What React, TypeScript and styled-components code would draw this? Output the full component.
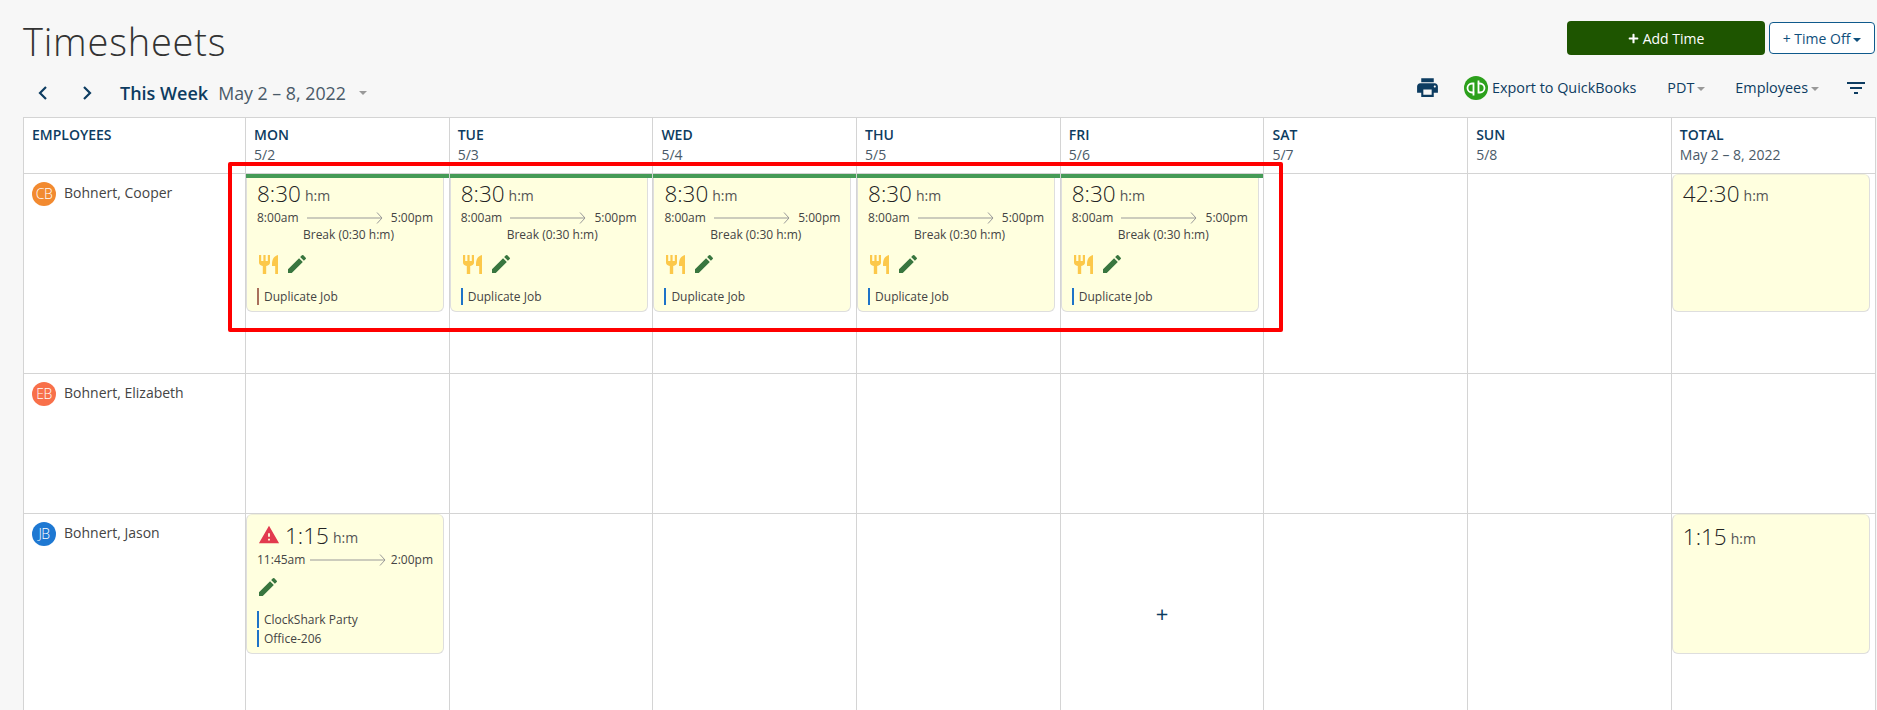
import React from 'react';
import styled, { createGlobalStyle } from 'styled-components';
import { MdEdit, MdFilterList, MdPrint, MdWarning } from 'react-icons/md';
import { FaPlus } from 'react-icons/fa';

const GlobalStyle = createGlobalStyle`
  html, body {
    margin: 0;
    height: 710px;
    overflow: hidden;
    background: #f7f7f7;
    font-family: "Open Sans", "Noto Sans", sans-serif;
    color: #333;
  }
`;

const Page = styled.div`
  position: relative;
  padding: 0 2px 0 23px;
`;

const TopBar = styled.div`
  display: flex;
  justify-content: space-between;
  height: 68px;
`;

const Title = styled.h1`
  margin: 16px 0 0;
  font-size: 38px;
  line-height: 50px;
  font-weight: 300;
  letter-spacing: 0.8px;
  color: #333;
`;

const TopButtons = styled.div`
  display: flex;
  gap: 4px;
  margin-top: 21px;
  align-items: flex-start;
`;

const AddButton = styled.button`
  display: flex;
  align-items: center;
  justify-content: center;
  gap: 4px;
  width: 198px;
  height: 34px;
  border: 0;
  border-radius: 4px;
  background: #1e5500;
  color: #fff;
  font: 500 14px "Open Sans", sans-serif;
`;

const OffButton = styled.button`
  width: 106px;
  height: 32px;
  margin-top: 1px;
  padding: 0;
  border: 1px solid #0f5a8c;
  border-radius: 4px;
  background: #fff;
  color: #0f4f7c;
  font: 400 14px "Open Sans", sans-serif;
`;

const Caret = styled.span<{ $muted?: boolean; $gap?: number }>`
  display: inline-block;
  margin-left: ${(p) => p.$gap ?? 3}px;
  vertical-align: middle;
  border-top: 4px solid ${(p) => (p.$muted ? '#999' : 'currentColor')};
  border-left: 4px solid transparent;
  border-right: 4px solid transparent;
`;

const NavBar = styled.div`
  display: flex;
  align-items: center;
  justify-content: space-between;
  height: 49px;
  color: #0d3c61;
`;

const WeekNav = styled.div`
  display: flex;
  align-items: center;
  padding-left: 15px;
`;

const Chevron = styled.svg`
  width: 10px;
  height: 14px;
  margin-right: 34px;
  fill: none;
  stroke: #0d3c61;
  stroke-width: 2.2;
`;

const ThisWeek = styled.span`
  margin-left: -6px;
  font-size: 18px;
  font-weight: 600;
`;

const WeekRange = styled.span`
  margin-left: 10px;
  font-size: 17.8px;
  color: #4a5a68;
`;

const Tools = styled.div`
  display: flex;
  align-items: center;
  margin-bottom: 10px;
  padding-right: 7px;
  font-size: 14.4px;
  font-weight: 500;
`;

const PrintIcon = styled(MdPrint)`
  font-size: 25px;
  color: #0d3c61;
  margin-right: 24px;
`;

const QbLogo = styled.svg`
  width: 24px;
  height: 24px;
  margin-right: 4px;
`;

const ToolLabel = styled.span<{ $gap: number }>`
  margin-right: ${(p) => p.$gap}px;
  white-space: nowrap;
`;

const FilterIcon = styled(MdFilterList)`
  font-size: 24px;
  color: #0d3c61;
`;

const Sheet = styled.div`
  display: grid;
  grid-template-columns: 222px repeat(8, 203.7px);
  width: 1853px;
  margin-right: -1px;
  background: #fff;
  border-top: 1px solid #d4d4d4;
  border-left: 1px solid #d4d4d4;
  box-sizing: border-box;
`;

const HeadCell = styled.div`
  height: 56px;
  padding: 7px 8px 0;
  box-sizing: border-box;
  border-right: 1px solid #d4d4d4;
  border-bottom: 1px solid #d4d4d4;
  color: #0d3c61;
  font-size: 14px;
  font-weight: 600;
  line-height: 20px;
`;

const HeadDate = styled.div`
  font-weight: 400;
  color: #4a5a68;
`;

const Cell = styled.div<{ $h: number }>`
  position: relative;
  height: ${(p) => p.$h}px;
  box-sizing: border-box;
  border-right: 1px solid #d4d4d4;
  border-bottom: 1px solid #d4d4d4;
`;

const Employee = styled.div`
  display: flex;
  align-items: flex-start;
  gap: 8px;
  padding: 8px;
  font-size: 14px;
  color: #444;
`;

const Avatar = styled.div<{ $color: string }>`
  width: 24px;
  height: 24px;
  border-radius: 50%;
  background: ${(p) => p.$color};
  color: #fff;
  font-size: 14px;
  font-weight: 300;
  line-height: 24px;
  text-align: center;
  letter-spacing: -0.5px;
`;

const EmployeeName = styled.span`
  line-height: 22px;
`;

const Card = styled.div<{ $green?: boolean; $h: number }>`
  box-sizing: border-box;
  width: 198px;
  height: ${(p) => p.$h}px;
  padding: 5px 10px 0;
  background: #ffffdf;
  border: 1px solid #dedede;
  border-top: ${(p) => (p.$green ? '0' : '1px solid #efefd8')};
  border-radius: ${(p) => (p.$green ? '0 0 6px 6px' : '6px')};
`;

const GreenBar = styled.div`
  position: absolute;
  top: 0;
  left: 0;
  right: 0;
  height: 4px;
  background: #459b57;
`;

const Hours = styled.div<{ $top?: number }>`
  display: flex;
  align-items: center;
  gap: 4px;
  box-sizing: border-box;
  height: 30px;
  padding-bottom: 2px;
  margin-top: ${(p) => p.$top ?? 0}px;
  font-size: 22.5px;
  font-weight: 300;
  color: #222;
`;

const Unit = styled.span`
  font-size: 14px;
  font-weight: 400;
  margin-top: 4px;
  color: #555;
`;

const TimeRow = styled.div`
  display: flex;
  align-items: center;
  justify-content: space-between;
  height: 17px;
  font-size: 12px;
  color: #444;
`;

const Arrow = styled.svg`
  width: 76px;
  height: 12px;
  fill: none;
  stroke: #999;
  stroke-width: 1;
`;

const BreakText = styled.div`
  height: 17px;
  text-align: center;
  font-size: 12px;
  line-height: 17px;
  padding-left: 7px;
  color: #444;
`;

const Icons = styled.div<{ $top: number }>`
  display: flex;
  align-items: center;
  gap: 8px;
  height: 22px;
  margin-top: ${(p) => p.$top}px;
`;

const ForkIcon = styled.svg`
  width: 19px;
  height: 19px;
  margin-left: 2px;
  fill: #fcc84a;
`;

const EditIcon = styled(MdEdit)`
  font-size: 24px;
  margin-left: -1px;
  color: #39763f;
`;

const Jobs = styled.div`
  display: flex;
  flex-direction: column;
  gap: 2px;
  margin-top: 13px;
`;

const Job = styled.div<{ $color: string }>`
  height: 17px;
  padding-left: 5px;
  border-left: 2px solid ${(p) => p.$color};
  font-size: 12px;
  line-height: 17px;
  color: #444;
`;

const WarnIcon = styled(MdWarning)`
  font-size: 22px;
  margin-left: 1px;
  margin-right: 1px;
  color: #e23a4e;
`;

const AddCell = styled.div`
  display: flex;
  align-items: center;
  justify-content: center;
  height: 198px;
  font-size: 22px;
  color: #0d3c61;
`;

const Highlight = styled.div`
  position: absolute;
  left: 228px;
  top: 162px;
  width: 1055px;
  height: 170px;
  box-sizing: border-box;
  border: 4px solid #f00;
  border-radius: 2px;
  pointer-events: none;
`;

const days = [
  ['MON', '5/2'],
  ['TUE', '5/3'],
  ['WED', '5/4'],
  ['THU', '5/5'],
  ['FRI', '5/6'],
  ['SAT', '5/7'],
  ['SUN', '5/8'],
];

const Fork = () => (
  <ForkIcon viewBox="0 0 19 19">
    <path d="M0 0h2.200v6h2.200V0h2.200v6h2.200V0H11v7.500c0 2-1.300 3-3.800 3.500V19H3.800v-8C1.300 10.500 0 9.500 0 7.500z" />
    <path d="M13 9C13 4 15 1 19 0v19h-2.800v-8H13z" />
  </ForkIcon>
);

const QuickBooks = () => (
  <QbLogo viewBox="0 0 24 24">
    <circle cx="12" cy="12" r="12" fill="#2ca01c" />
    <path
      d="M10.500 16.500H8a4.500 4.500 0 0 1 0-9h1.500v12M13.500 7.500H16a4.500 4.500 0 0 1 0 9h-1.500v-12"
      fill="none"
      stroke="#fff"
      strokeWidth="1.800"
    />
  </QbLogo>
);

const TimeArrow = () => (
  <Arrow viewBox="0 0 76 12">
    <path d="M0 6h75M70 .5 75 6l-5 5.500" />
  </Arrow>
);

const ShiftCard: React.FC<{ color: string }> = ({ color }) => (
  <>
    <GreenBar />
    <Card $green $h={138}>
      <Hours>
        8:30 <Unit>h:m</Unit>
      </Hours>
      <TimeRow>
        8:00am
        <TimeArrow />
        5:00pm
      </TimeRow>
      <BreakText>Break (0:30 h:m)</BreakText>
      <Icons $top={10}>
        <Fork />
        <EditIcon />
      </Icons>
      <Jobs>
        <Job $color={color}>Duplicate Job</Job>
      </Jobs>
    </Card>
  </>
);

const Empty: React.FC<{ h: number; count: number }> = ({ h, count }) => (
  <>
    {Array.from({ length: count }, (_, i) => (
      <Cell key={i} $h={h} />
    ))}
  </>
);

export default function App() {
  return (
    <Page>
      <GlobalStyle />
      <TopBar>
        <Title>Timesheets</Title>
        <TopButtons>
          <AddButton>
            <FaPlus size={11} /> Add Time
          </AddButton>
          <OffButton>
            + Time Off
            <Caret />
          </OffButton>
        </TopButtons>
      </TopBar>
      <NavBar>
        <WeekNav>
          <Chevron viewBox="0 0 10 14">
            <path d="M8 1 2 7l6 6" />
          </Chevron>
          <Chevron viewBox="0 0 10 14">
            <path d="m2 1 6 6-6 6" />
          </Chevron>
          <ThisWeek>This Week</ThisWeek>
          <WeekRange>May 2 – 8, 2022</WeekRange>
          <Caret $muted $gap={13} />
        </WeekNav>
        <Tools>
          <PrintIcon />
          <QuickBooks />
          <ToolLabel $gap={31}>Export to QuickBooks</ToolLabel>
          <ToolLabel $gap={30}>
            PDT
            <Caret $muted />
          </ToolLabel>
          <ToolLabel $gap={25}>
            Employees
            <Caret $muted />
          </ToolLabel>
          <FilterIcon />
        </Tools>
      </NavBar>
      <Sheet>
        <HeadCell>EMPLOYEES</HeadCell>
        {days.map(([day, date]) => (
          <HeadCell key={day}>
            {day}
            <HeadDate>{date}</HeadDate>
          </HeadCell>
        ))}
        <HeadCell>
          TOTAL
          <HeadDate>May 2 – 8, 2022</HeadDate>
        </HeadCell>

        <Cell $h={200}>
          <Employee>
            <Avatar $color="#f28a30">CB</Avatar>
            <EmployeeName>Bohnert, Cooper</EmployeeName>
          </Employee>
        </Cell>
        {['#a9705c', '#1e73c8', '#1e73c8', '#1e73c8', '#1e73c8'].map((color, i) => (
          <Cell key={i} $h={200}>
            <ShiftCard color={color} />
          </Cell>
        ))}
        <Empty h={200} count={2} />
        <Cell $h={200}>
          <Card $h={138}>
            <Hours $top={-1}>
              42:30 <Unit>h:m</Unit>
            </Hours>
          </Card>
        </Cell>

        <Cell $h={140}>
          <Employee>
            <Avatar $color="#f8704a">EB</Avatar>
            <EmployeeName>Bohnert, Elizabeth</EmployeeName>
          </Employee>
        </Cell>
        <Empty h={140} count={8} />

        <Cell $h={200}>
          <Employee>
            <Avatar $color="#1e78d2">JB</Avatar>
            <EmployeeName>Bohnert, Jason</EmployeeName>
          </Employee>
        </Cell>
        <Cell $h={200}>
          <Card $h={140}>
            <Hours $top={1}>
              <WarnIcon />
              1:15 <Unit>h:m</Unit>
            </Hours>
            <TimeRow>
              11:45am
              <TimeArrow />
              2:00pm
            </TimeRow>
            <Icons $top={8}>
              <EditIcon />
            </Icons>
            <Jobs>
              <Job $color="#1e73c8">ClockShark Party</Job>
              <Job $color="#1e73c8">Office-206</Job>
            </Jobs>
          </Card>
        </Cell>
        <Empty h={200} count={3} />
        <Cell $h={200}>
          <AddCell>+</AddCell>
        </Cell>
        <Empty h={200} count={2} />
        <Cell $h={200}>
          <Card $h={140}>
            <Hours $top={2}>
              1:15 <Unit>h:m</Unit>
            </Hours>
          </Card>
        </Cell>
      </Sheet>
      <Highlight />
    </Page>
  );
}
